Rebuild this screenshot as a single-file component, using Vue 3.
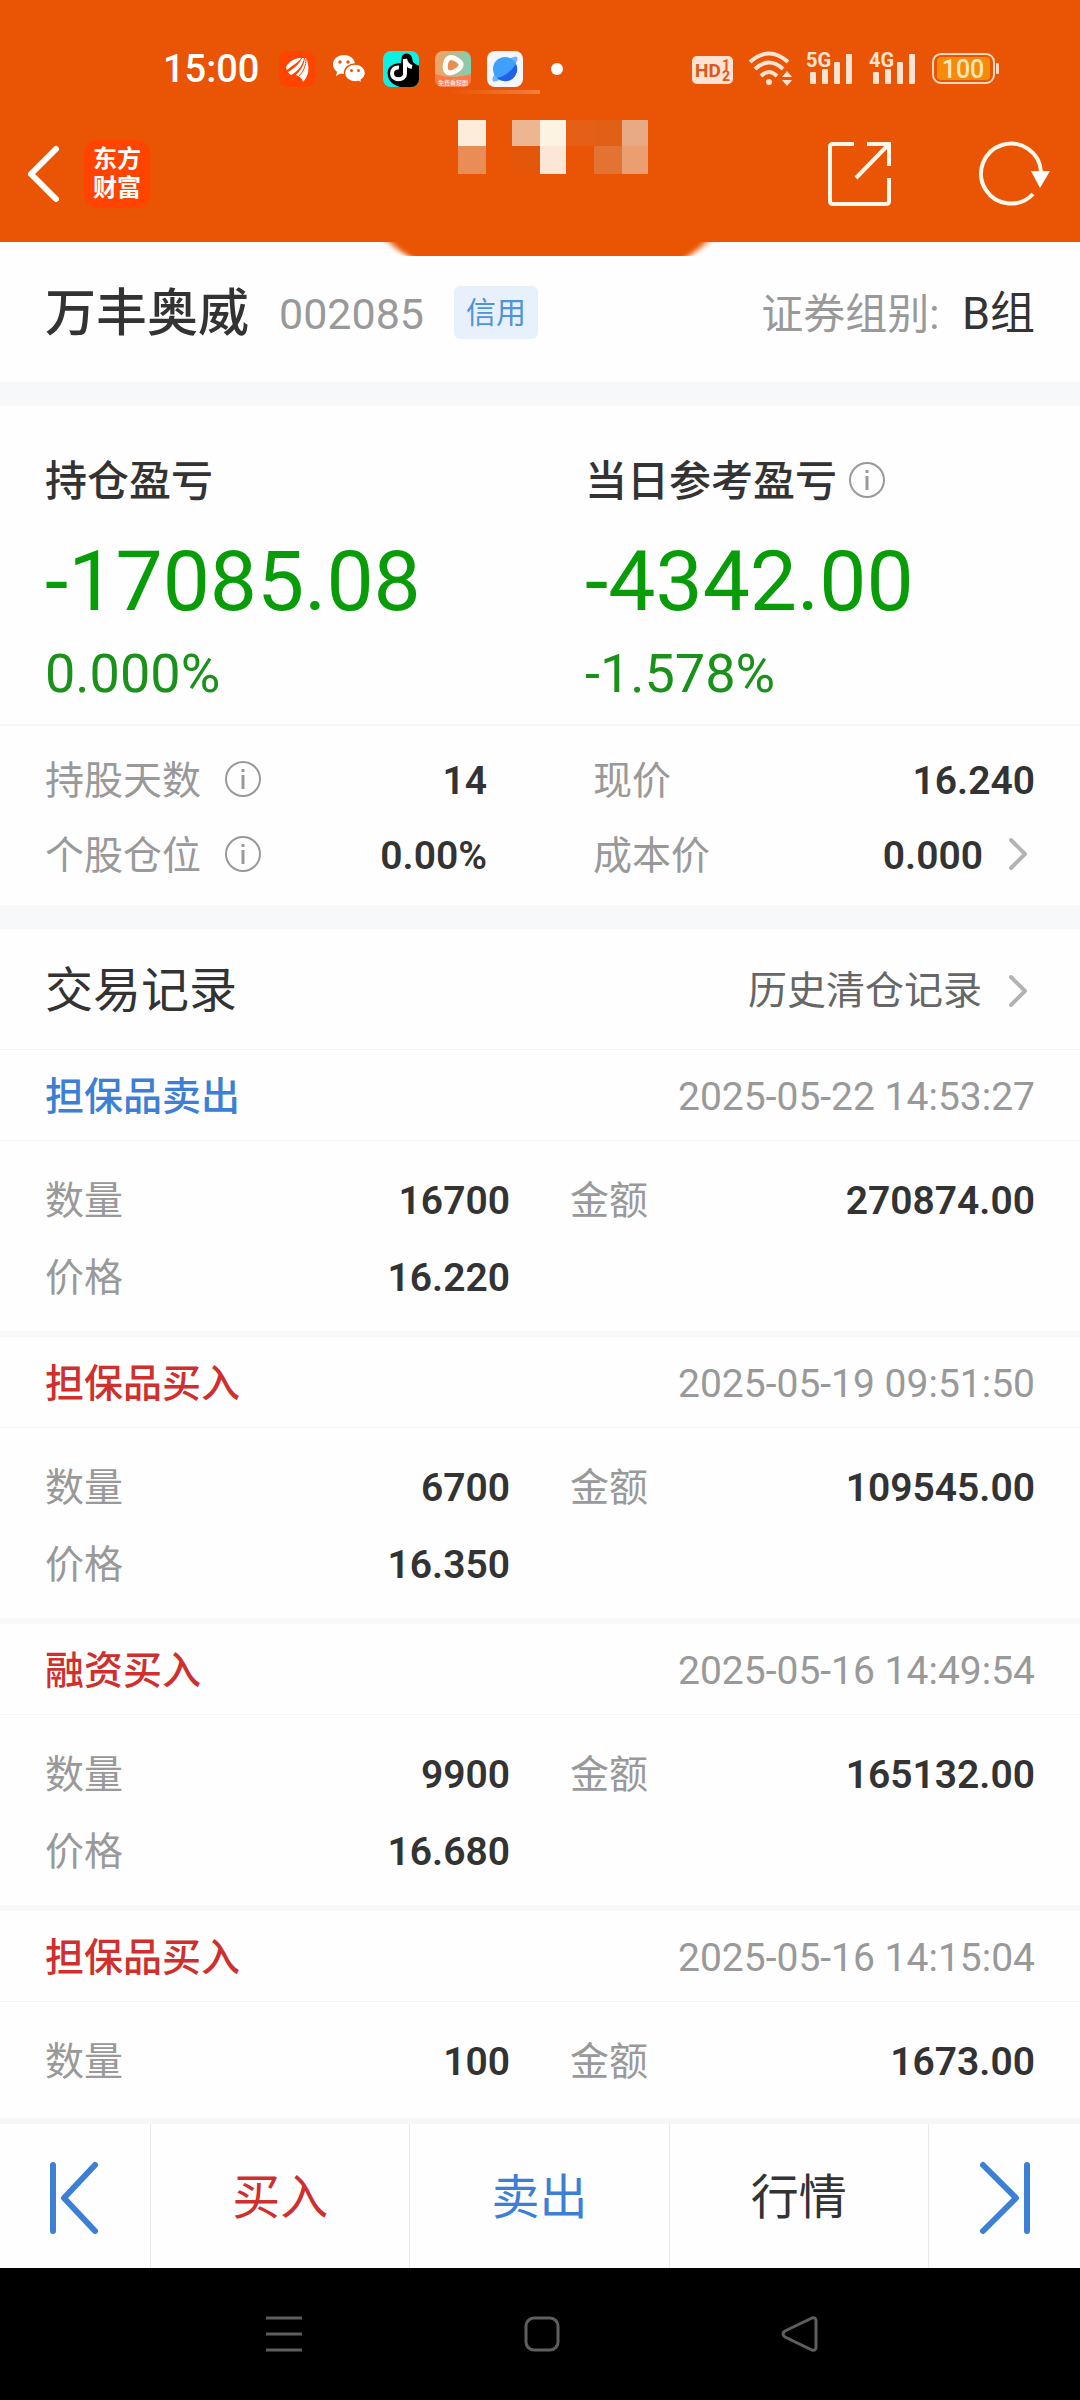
<script setup>
import { ref } from 'vue'

const stock = ref({
  name: '万丰奥威',
  code: '002085',
  tag: '信用',
  group: 'B组'
})

// 交易记录列表
const records = ref([
  { type: '担保品卖出', side: 'sell', time: '2025-05-22 14:53:27', count: '16700', amount: '270874.00', price: '16.220' },
  { type: '担保品买入', side: 'buy', time: '2025-05-19 09:51:50', count: '6700', amount: '109545.00', price: '16.350' },
  { type: '融资买入', side: 'buy', time: '2025-05-16 14:49:54', count: '9900', amount: '165132.00', price: '16.680' },
  { type: '担保品买入', side: 'buy', time: '2025-05-16 14:15:04', count: '100', amount: '1673.00', price: '' }
])
</script>

<template>
  <div class="page">
    <header class="header">
      <!-- 系统状态栏 -->
      <div class="status-bar">
        <div class="status-left">
          <span class="clock">15:00</span>
          <svg class="app-icon" viewBox="0 0 36 36">
            <rect width="36" height="36" rx="9" fill="#ff4400" />
            <path d="M7 16C11 9 17 7 22 7C20 11 14 14 8 19Q7 18 7 16Z" fill="#fff" />
            <path d="M9 21C16 17 21 12 23 7L25 7C24 14 19 20 12 24Q10 23 9 21Z" fill="#fff" />
            <path d="M17 24C22 19 25 14 26 7L27 7C31 15 30 25 24 31C23 27 20 25 17 24Z" fill="#fff" />
            <path d="M20 25C25 20 27 14 27 8" fill="none" stroke="#ff4400" stroke-width="1" />
          </svg>
          <svg class="app-icon" viewBox="0 0 36 36">
            <path d="M13 4C6.500 4 2 8.300 2 13.500C2 16.500 3.500 19 6 20.800L5 25L9.500 22.500C10.600 22.800 12 23 13 23C19.500 23 24 18.700 24 13.500C24 8.300 19.500 4 13 4Z" fill="#fff" />
            <path d="M24 13C18 13 13.500 17 13.500 22C13.500 27 18 31 24 31C25.200 31 26.300 30.800 27.400 30.500L31 32.500L30.200 29C32.700 27.300 34.500 24.900 34.500 22C34.500 17 30 13 24 13Z" fill="#fff" stroke="#e95504" stroke-width="1.500" />
            <g fill="#e95504">
              <circle cx="9" cy="11" r="1.700" />
              <circle cx="17" cy="11" r="1.700" />
              <circle cx="20.500" cy="19.500" r="1.500" />
              <circle cx="27.500" cy="19.500" r="1.500" />
            </g>
          </svg>
          <svg class="app-icon" viewBox="0 0 36 36">
            <clipPath id="clip-note"><rect width="36" height="36" rx="8" /></clipPath>
            <g clip-path="url(#clip-note)">
              <rect width="36" height="36" fill="#0ff0e4" />
              <path d="M19 5C22 1 28 2 29 7L30 11C32 13 34 14 37 15V37H22C14 36 6 32 5 25C3 17 9 12 18 12Z" fill="#000" />
              <path d="M22 8V23C22 30 9 30 9 22.500C9 18.500 12 16 16 16.500" fill="none" stroke="#fff" stroke-width="4" />
              <path d="M22 8C23 13 25 15 29 16" fill="none" stroke="#fff" stroke-width="4" />
            </g>
          </svg>
          <svg class="app-icon" viewBox="0 0 36 36">
            <defs>
              <linearGradient id="video-bg" x1="0" y1="0" x2="1" y2="0">
                <stop offset="0" stop-color="#f7a064" />
                <stop offset="1" stop-color="#7fd0b4" />
              </linearGradient>
              <clipPath id="clip-video"><rect width="36" height="36" rx="8" /></clipPath>
            </defs>
            <g clip-path="url(#clip-video)">
              <rect width="36" height="36" fill="url(#video-bg)" />
              <path d="M0 23Q18 29 36 23V36H0Z" fill="#ff7a45" />
              <path d="M14 7C18 5 27 11 26 14C26 18 16 24 12 21C9 18 10 9 14 7Z" fill="#e8914f" stroke="#fff" stroke-width="5" stroke-linejoin="round" />
            </g>
            <text x="18" y="34" class="video-text" text-anchor="middle">免费看短剧</text>
          </svg>
          <svg class="app-icon" viewBox="0 0 36 36">
            <rect width="36" height="36" rx="8" fill="#f3f6fb" />
            <ellipse cx="18" cy="18" rx="17" ry="5" transform="rotate(-45 18 18)" fill="#6fb4f6" />
            <circle cx="18" cy="18" r="12" fill="#3fa0fb" />
            <path d="M29 13A12 12 0 0 1 10 27Q22 24 29 13Z" fill="#1f62e8" />
          </svg>
          <span class="dot"></span>
        </div>
        <div class="status-right">
          <svg width="41" height="36" viewBox="0 0 41 36">
            <rect x="0" y="5" width="41" height="28" rx="5" fill="#ffe3d2" />
            <text x="3" y="26" class="hd-text">HD</text>
            <text x="30" y="19" class="hd-num">1</text>
            <text x="30" y="30" class="hd-num">2</text>
          </svg>
          <svg class="wifi" width="45" height="36" viewBox="0 0 45 36">
            <g fill="none" stroke="#ffe3d2" stroke-width="4">
              <path d="M1 11Q20 -6 39 11" />
              <path d="M6 18Q20 5 34 18" />
              <path d="M12 25Q20 17 28 25" />
            </g>
            <circle cx="20" cy="31" r="3" fill="#ffe3d2" />
            <path d="M38 20L43 26H33ZM38 35L33 29H43Z" fill="#ffe3d2" />
          </svg>
          <svg v-for="net in ['5G', '4G']" :key="net" width="47" height="36" viewBox="0 0 47 36">
            <text x="0" y="16" class="net-text">{{ net }}</text>
            <g fill="#ffe3d2">
              <rect x="4" y="21" width="6" height="12" rx="1" />
              <rect x="16" y="18" width="6" height="15" rx="1" />
              <rect x="28" y="11" width="6" height="22" rx="1" />
              <rect x="40" y="3" width="6" height="30" rx="1" />
            </g>
          </svg>
          <svg width="67" height="36" viewBox="0 0 67 36">
            <rect x="1" y="3" width="61" height="29" rx="8" fill="none" stroke="#ffd9bd" stroke-width="2" />
            <rect x="5" y="6" width="53" height="23" rx="4" fill="#f58a0b" />
            <rect x="64" y="12" width="3" height="11" rx="1" fill="#ffd9bd" />
            <text x="31" y="27" class="battery-text" text-anchor="middle">100</text>
          </svg>
        </div>
        <i class="streak"></i>
      </div>

      <!-- 标题栏 -->
      <div class="nav-bar">
        <button class="icon-btn" aria-label="返回">
          <svg width="36" height="60" viewBox="0 0 36 60">
            <path d="M30 5L5 30L30 55" fill="none" stroke="#fff" stroke-width="6" stroke-linecap="round" stroke-linejoin="round" />
          </svg>
        </button>
        <div class="logo"><span>东方</span><span>财富</span></div>
        <svg class="mosaic" width="192" height="54" viewBox="0 0 192 54">
          <rect x="0" y="0" width="28" height="26" fill="#fdecd9" />
          <rect x="0" y="26" width="28" height="28" fill="#e88d58" />
          <rect x="54" y="0" width="28" height="26" fill="#edb690" />
          <rect x="54" y="26" width="28" height="28" fill="#e4560a" />
          <rect x="82" y="0" width="26" height="26" fill="#fdf3e2" />
          <rect x="82" y="26" width="26" height="28" fill="#fce7d7" />
          <rect x="108" y="0" width="28" height="26" fill="#e55f17" />
          <rect x="136" y="0" width="28" height="26" fill="#e26016" />
          <rect x="136" y="26" width="28" height="28" fill="#e37332" />
          <rect x="164" y="0" width="26" height="26" fill="#e7aa85" />
          <rect x="164" y="26" width="26" height="28" fill="#eb9e70" />
        </svg>
        <div class="nav-actions">
          <button class="icon-btn" aria-label="分享">
            <svg width="64" height="64" viewBox="0 0 64 64" fill="none" stroke="#fff8ea" stroke-width="4">
              <path d="M26 2H5Q2 2 2 5V59Q2 62 5 62H58Q61 62 61 59V36" />
              <path d="M39 2H61V24" />
              <path d="M61 2L28 36" />
            </svg>
          </button>
          <button class="icon-btn" aria-label="刷新">
            <svg width="72" height="64" viewBox="0 0 72 64">
              <path d="M62 30A30 30 0 1 0 54 52" fill="none" stroke="#fff8ea" stroke-width="4" />
              <path d="M52 29H71L61 46Z" fill="#fff" />
            </svg>
          </button>
        </div>
      </div>
      <div class="header-tail">
        <svg width="340" height="15" viewBox="0 0 340 15">
          <filter id="soft" x="-10%" y="-100%" width="120%" height="300%"><feGaussianBlur stdDeviation="4 1" /></filter>
          <path d="M0 -10H340L322 6Q312 14 300 20H44Q28 14 18 6Z" fill="#e95504" filter="url(#soft)" />
        </svg>
      </div>
    </header>

    <main class="content">
      <section class="stock">
        <h1 class="stock-name">{{ stock.name }}</h1>
        <span class="stock-code">{{ stock.code }}</span>
        <span class="stock-tag">{{ stock.tag }}</span>
        <span class="stock-group">证券组别: <b>{{ stock.group }}</b></span>
      </section>

      <section class="profit">
        <div class="profit-item">
          <div class="profit-title">持仓盈亏</div>
          <div class="profit-value">-17085.08</div>
          <div class="profit-rate">0.000%</div>
        </div>
        <div class="profit-item">
          <div class="profit-title">
            当日参考盈亏
            <svg class="info" viewBox="0 0 36 36"><circle cx="18" cy="18" r="17" /><path d="M18 14V28M18 8V11" /></svg>
          </div>
          <div class="profit-value">-4342.00</div>
          <div class="profit-rate">-1.578%</div>
        </div>
      </section>

      <section class="detail">
        <div class="detail-col">
          <div class="row">
            <span class="label">持股天数</span>
            <svg class="info" viewBox="0 0 36 36"><circle cx="18" cy="18" r="17" /><path d="M18 14V28M18 8V11" /></svg>
            <span class="value">14</span>
          </div>
          <div class="row">
            <span class="label">个股仓位</span>
            <svg class="info" viewBox="0 0 36 36"><circle cx="18" cy="18" r="17" /><path d="M18 14V28M18 8V11" /></svg>
            <span class="value">0.00%</span>
          </div>
        </div>
        <div class="detail-col">
          <div class="row">
            <span class="label">现价</span>
            <span class="value">16.240</span>
          </div>
          <div class="row">
            <span class="label">成本价</span>
            <span class="value">0.000</span>
            <svg class="arrow" viewBox="0 0 20 36"><path d="M3 4L17 18L3 32" /></svg>
          </div>
        </div>
      </section>

      <section class="records">
        <div class="records-head">
          <h2>交易记录</h2>
          <a href="#">
            历史清仓记录
            <svg class="arrow" viewBox="0 0 20 36"><path d="M3 4L17 18L3 32" /></svg>
          </a>
        </div>
        <article v-for="item in records" :key="item.time" class="record">
          <div class="record-head">
            <span :class="['record-type', item.side]">{{ item.type }}</span>
            <time>{{ item.time }}</time>
          </div>
          <div class="record-body">
            <div class="cell"><span class="label">数量</span><span class="value">{{ item.count }}</span></div>
            <div class="cell"><span class="label">金额</span><span class="value">{{ item.amount }}</span></div>
            <div v-if="item.price" class="cell"><span class="label">价格</span><span class="value">{{ item.price }}</span></div>
          </div>
        </article>
      </section>
    </main>

    <footer class="footer">
      <button aria-label="上一只">
        <svg width="52" height="72" viewBox="0 0 52 72"><path d="M4 3V69M46 3L15 36L46 69" /></svg>
      </button>
      <button class="buy">买入</button>
      <button class="sell">卖出</button>
      <button>行情</button>
      <button aria-label="下一只">
        <svg width="52" height="72" viewBox="0 0 52 72"><path d="M48 3V69M4 3L37 36L4 69" /></svg>
      </button>
    </footer>

    <!-- 系统导航键 -->
    <nav class="system-nav">
      <button class="icon-btn" aria-label="菜单">
        <svg width="36" height="36" viewBox="0 0 36 36"><path d="M0 2H36M0 18H36M0 34H36" /></svg>
      </button>
      <button class="icon-btn" aria-label="主页">
        <svg width="36" height="36" viewBox="0 0 36 36"><rect x="2" y="2" width="32" height="32" rx="8" /></svg>
      </button>
      <button class="icon-btn" aria-label="后退">
        <svg width="36" height="36" viewBox="0 0 36 36"><path d="M30 2L3 15Q-1 18 3 21L30 34Q34 35 34 31V5Q34 1 30 2Z" /></svg>
      </button>
    </nav>
  </div>
</template>

<style>
body {
  margin: 0;
  background: #fff;
}
</style>

<style scoped>
.page {
  min-height: 100vh;
  display: flex;
  flex-direction: column;
  color: #333;
  background: #fefefe;
  font-family: Roboto, 'Noto Sans CJK SC', sans-serif;
  font-size: 39px;
  line-height: 48px;
}
svg {
  display: block;
  flex: none;
  overflow: visible;
}
button {
  border: 0;
  padding: 0;
  background: none;
  font: inherit;
  color: inherit;
}
h1,
h2 {
  margin: 0;
  font-weight: 400;
}

/* 顶部 */
.header {
  position: relative;
  background: #e95504;
}
.status-bar {
  position: relative;
  display: flex;
  justify-content: space-between;
  align-items: center;
  height: 106px;
  padding: 32px 81px 0 163px;
  box-sizing: border-box;
}
.status-left {
  display: flex;
  align-items: center;
  gap: 16px;
}
.status-right {
  display: flex;
  align-items: center;
  gap: 16px;
}
.wifi {
  margin-right: -4px;
}
.clock {
  margin-right: 4px;
  color: #fff;
  font-size: 38px;
  line-height: 36px;
  font-weight: 500;
}
.app-icon {
  width: 36px;
  height: 36px;
}
.video-text {
  font-size: 6px;
  fill: #fff;
}
.dot {
  width: 12px;
  height: 12px;
  margin-left: 12px;
  border-radius: 50%;
  background: #fff;
}
.hd-text {
  font-size: 19px;
  font-weight: 700;
  fill: #e0571a;
}
.hd-num {
  font-size: 14px;
  font-weight: 700;
  fill: #e0571a;
}
.net-text {
  font-size: 20px;
  font-weight: 700;
  fill: #ffe3d2;
}
.battery-text {
  font-size: 25px;
  font-weight: 500;
  fill: #ffe6bd;
}
.streak {
  position: absolute;
  left: 450px;
  top: 90px;
  width: 90px;
  height: 4px;
  background: linear-gradient(to right, transparent, #f08040);
}
.nav-bar {
  position: relative;
  display: flex;
  align-items: center;
  height: 136px;
  padding: 0 29px 0 26px;
}
.logo {
  display: flex;
  flex-direction: column;
  justify-content: center;
  align-items: center;
  width: 66px;
  height: 68px;
  margin-left: 22px;
  border-radius: 14px;
  background: #ff4400;
  color: #fff;
  font-size: 24px;
  line-height: 29px;
  font-weight: 700;
}
.mosaic {
  position: absolute;
  left: 458px;
  top: 14px;
}
.nav-actions {
  display: flex;
  gap: 87px;
  margin-left: auto;
}
.header-tail {
  position: absolute;
  left: 50%;
  top: 100%;
  height: 14px;
  margin-left: -162px;
  overflow: hidden;
}

/* 股票信息 */
.content {
  flex: 1;
}
.stock {
  display: flex;
  align-items: center;
  height: 136px;
  padding: 4px 45px 0;
  border-bottom: 24px solid #f6f8fa;
}
.stock-name {
  font-size: 51px;
  font-weight: 500;
}
.stock-code {
  margin-left: 30px;
  color: #999;
  font-size: 43px;
}
.stock-tag {
  margin: 0 0 4px 30px;
  padding: 0 12px;
  border-radius: 6px;
  background: #e8f1fb;
  color: #4f93d9;
  font-size: 30px;
  line-height: 53px;
}
.stock-group {
  margin-left: auto;
  color: #999;
  font-size: 42px;
}
.stock-group b {
  margin-left: 12px;
  color: #333;
  font-size: 45px;
  font-weight: 400;
}

/* 盈亏 */
.profit {
  display: grid;
  grid-template-columns: 1fr 1fr;
  padding: 46px 0 20px;
  border-bottom: 2px solid #f6f7f8;
}
.profit-item {
  padding-left: 45px;
}
.profit-title {
  display: flex;
  align-items: center;
  gap: 12px;
  font-size: 42px;
  line-height: 60px;
  font-weight: 500;
}
.profit-value {
  margin-top: 20px;
  color: #089c08;
  font-size: 84px;
  line-height: 100px;
}
.profit-rate {
  margin-top: 12px;
  color: #1a911a;
  font-size: 54px;
  line-height: 60px;
}
.info {
  width: 36px;
  height: 36px;
  margin-bottom: 4px;
  fill: none;
  stroke: #999;
  stroke-width: 2;
}
.info path {
  stroke-width: 3;
}
.arrow {
  width: 20px;
  height: 36px;
  fill: none;
  stroke: #b3b3b3;
  stroke-width: 4;
  stroke-linecap: round;
  stroke-linejoin: round;
}
.label {
  color: #999;
}
.value {
  margin-left: auto;
  font-weight: 600;
}
.detail {
  display: grid;
  grid-template-columns: 1fr 1fr;
  column-gap: 106px;
  padding: 17px 45px 12px;
  border-bottom: 24px solid #f6f8fa;
}
.row {
  display: flex;
  align-items: center;
  height: 75px;
}
.row .info {
  margin-left: 24px;
}
.row .arrow {
  margin: 0 7px 4px 25px;
}

/* 交易记录 */
.records-head {
  display: flex;
  justify-content: space-between;
  align-items: center;
  height: 116px;
  padding: 4px 52px 0 45px;
  border-bottom: 1px solid #f3f4f6;
}
.records-head h2 {
  font-size: 48px;
}
.records-head a {
  display: flex;
  align-items: center;
  gap: 26px;
  color: #666;
  text-decoration: none;
}
.record {
  border-bottom: 6px solid #f6f8fa;
}
.record:last-child {
  border-bottom: 0;
}
.record-head {
  display: flex;
  justify-content: space-between;
  align-items: center;
  height: 86px;
  padding: 4px 45px 0;
  border-bottom: 1px solid #f3f4f6;
}
.record-type {
  font-weight: 500;
}
time {
  color: #999;
}
.record-body {
  display: grid;
  grid-template-columns: 1fr 1fr;
  column-gap: 60px;
  padding: 21px 45px 15px;
}
.cell {
  display: flex;
  align-items: center;
  height: 77px;
}
.sell {
  color: #3d7fd4;
}
.buy {
  color: #cf302e;
}

/* 底部操作栏 */
.footer {
  display: grid;
  grid-template-columns: 151px 1fr 1fr 1fr 151px;
  height: 144px;
  border-top: 6px solid #f4f6f8;
  font-size: 48px;
}
.footer button {
  display: flex;
  align-items: center;
  justify-content: center;
  padding-top: 3px;
  border-right: 1px solid #eaeaea;
}
.footer button:last-child {
  border-right: 0;
}
.footer svg {
  fill: none;
  stroke: #3d7fd4;
  stroke-width: 6;
  stroke-linecap: round;
  stroke-linejoin: round;
}
.system-nav {
  display: flex;
  justify-content: center;
  align-items: center;
  gap: 222px;
  height: 132px;
  padding-left: 4px;
  background: #000;
}
.system-nav svg {
  fill: none;
  stroke: #5e5e5e;
  stroke-width: 3;
}
</style>
